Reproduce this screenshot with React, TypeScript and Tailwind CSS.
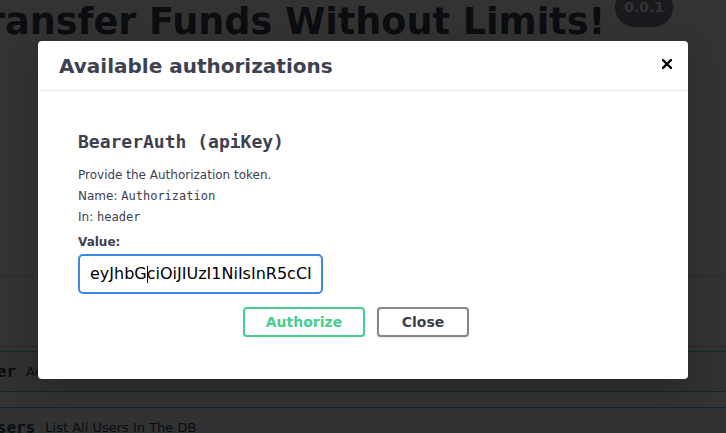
import React from "react";

const sans = "font-['DejaVu_Sans',sans-serif]";
const mono = "font-['DejaVu_Sans_Mono',monospace]";

function CloseIcon() {
  return (
    <svg width="10" height="10" viewBox="0 0 10 10" fill="none">
      <path d="M1 1L9 9M9 1L1 9" stroke="#000" strokeWidth="2.4" strokeLinecap="square" />
    </svg>
  );
}

export default function App() {
  return (
    <div className={`relative h-[433px] w-[726px] overflow-hidden bg-white ${sans} text-[#3b4151]`}>
      {/* page behind the modal, scrolled sideways */}
      <div className="ml-[-34px] mt-[1px] flex h-[40px] items-start">
        <h1 className="whitespace-nowrap text-[36.6px] font-bold leading-[42px]">
          Transfer Funds Without Limits!
        </h1>
        <span className="ml-[10px] mt-[-13px] flex h-[39px] items-center rounded-full bg-[#7d8492] px-[9px] text-[14px] font-bold text-white">
          0.0.1
        </span>
      </div>

      <div className="h-[234px] bg-white shadow-[0_1px_2px_0_rgba(0,0,0,0.15)]" />

      <div className="h-[72px] border-b border-[#3b4151]/30" />

      <div className="ml-[-100px] mt-[4px] flex h-[41px] w-[900px] items-center rounded-[4px] border border-[#49cc90] bg-[#49cc90]/10 pl-[38px]">
        <span className={`${mono} pr-[10px] text-[16px] font-bold`}>/adduser</span>
        <span className="text-[13px]">Add User To The DB</span>
      </div>

      <div className="ml-[-100px] mt-[15px] flex h-[41px] w-[900px] items-center rounded-[4px] border border-[#61affe] bg-[#61affe]/10 pl-[38px]">
        <span className={`${mono} pr-[10px] text-[16px] font-bold`}>/listusers</span>
        <span className="text-[13px]">List All Users In The DB</span>
      </div>

      {/* backdrop */}
      <div className="absolute inset-0 bg-black/80" />

      {/* modal */}
      <div className="absolute left-[38px] top-[41px] w-[650px] rounded-[4px] bg-white shadow-[0_10px_30px_0_rgba(0,0,0,0.2)]">
        <div className="flex h-[50px] items-center justify-between border-b border-[#ebebeb] pl-[21px] pr-[11px]">
          <h3 className="text-[20px] font-bold">Available authorizations</h3>
          <button className="mt-[-3px] flex h-[20px] w-[20px] items-center justify-center">
            <CloseIcon />
          </button>
        </div>

        <div className="px-[40px] pb-[42px] pt-[39px]">
          <h4 className={`${mono} text-[18px] font-bold leading-[24px]`}>BearerAuth (apiKey)</h4>

          <div className="mt-[11px] text-[12px] leading-[21px]">
            <p>Provide the Authorization token.</p>
            <p>
              Name: <code className={mono}>Authorization</code>
            </p>
            <p>
              In: <code className={mono}>header</code>
            </p>
          </div>

          <label className="mt-[4px] block text-[12px] font-bold leading-[21px]">Value:</label>

          <div className="mt-[1px] flex h-[40px] w-[245px] items-center rounded-[5px] border-2 border-[#3b86e8] pl-[10px]">
            <div className="w-[221px] min-w-0 overflow-hidden whitespace-nowrap text-[16px] text-black">
              eyJhbG
              <span className="mr-[-1px] inline-block h-[17px] w-px bg-black align-middle" />
              ciOiJIUzI1NiIsInR5cCI6IkpXVCJ9.eyJ1c2VySWQiOjF9
            </div>
          </div>

          <div className="mt-[13px] flex justify-center gap-[12px] pr-[14px]">
            <button className="w-[122px] rounded-[4px] border-2 border-[#49cc90] bg-white py-[5px] text-center text-[14px] font-bold leading-[16px] text-[#49cc90] shadow-[0_1px_2px_rgba(0,0,0,0.1)]">
              Authorize
            </button>
            <button className="w-[92px] rounded-[4px] border-2 border-[#888] bg-white py-[5px] text-center text-[14px] font-bold leading-[16px] text-[#3b4151] shadow-[0_1px_2px_rgba(0,0,0,0.1)]">
              Close
            </button>
          </div>
        </div>
      </div>
    </div>
  );
}
